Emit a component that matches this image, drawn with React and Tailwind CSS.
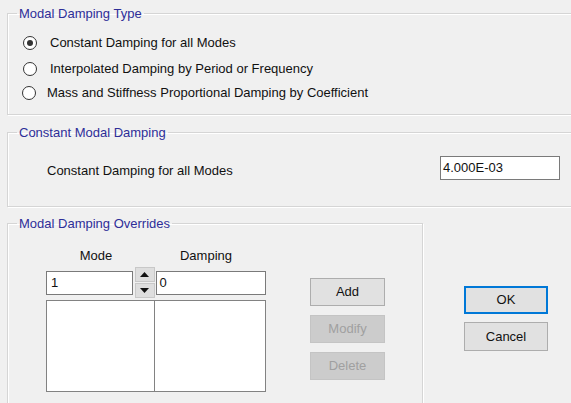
import React from 'react';

const font = { fontFamily: '"Liberation Sans", Arial, sans-serif' };

function GroupBox({ title, className, children }) {
    return (
        <fieldset className={`border border-[#d5d5d5] shadow-[inset_1px_1px_0_#ffffff,1px_1px_0_#ffffff] ${className}`}>
            <legend className="ml-[9px] px-[2px] text-[13px] leading-[15px] text-[#2e2e98]">{title}</legend>
            {children}
        </fieldset>
    );
}

function Radio({ checked, label, className }) {
    return (
        <div className={`flex h-[20px] items-center ${className}`}>
            <span className="flex h-[14px] w-[14px] items-center justify-center rounded-full border border-[#333333] bg-white">
                {checked && <span className="h-[6px] w-[6px] rounded-full bg-[#333333]" />}
            </span>
            <span className="ml-[13px] text-[13px] text-[#111]">{label}</span>
        </div>
    );
}

function Btn({ children, disabled, primary }) {
    if (primary) {
        return (
            <button className="flex h-[28px] w-[84px] items-center justify-center border-2 border-[#0078d7] bg-[#e1e1e1] text-[13px] text-[#111]">
                {children}
            </button>
        );
    }
    return (
        <button
            className={`flex h-[28px] items-center justify-center border text-[13px] ${
                disabled ? 'border-[#c4c4c4] bg-[#cccccc] text-[#a0a0a0]' : 'border-[#adadad] bg-[#e1e1e1] text-[#111]'
            }`}
        >
            {children}
        </button>
    );
}

export default function App() {
    return (
        <div className="h-[403px] w-[571px] overflow-hidden bg-[#f0f0f0] pl-[7px]" style={font}>
            {/* Modal Damping Type */}
            <GroupBox title="Modal Damping Type" className="mt-[6px] w-[600px] pb-[11px]">
                <Radio checked label="Constant Damping for all Modes" className="ml-[15px] mt-[12px]" />
                <Radio label="Interpolated Damping by Period or Frequency" className="ml-[15px] mt-[6px]" />
                <div className="ml-[14px] mt-[4px] flex h-[20px] items-center">
                    <span className="h-[14px] w-[14px] rounded-full border border-[#333333] bg-white" />
                    <span className="ml-[11px] text-[13px] text-[#111]">
                        Mass and Stiffness Proportional Damping by Coefficient
                    </span>
                </div>
            </GroupBox>

            {/* Constant Modal Damping */}
            <GroupBox title="Constant Modal Damping" className="mt-[10px] w-[600px] pb-[26px]">
                <div className="mt-[16px] flex h-[24px] items-center">
                    <span className="ml-[39px] mt-[6px] w-[393px] text-[13px] text-[#111]">
                        Constant Damping for all Modes
                    </span>
                    <div className="flex h-[24px] w-[120px] items-center border border-[#7a7a7a] bg-white pl-[2px] text-[13px] text-[#111]">
                        4.000E-03
                    </div>
                </div>
            </GroupBox>

            <div className="mt-[9px] flex">
                {/* Modal Damping Overrides */}
                <GroupBox title="Modal Damping Overrides" className="h-[220px] w-[416px]">
                    <div className="ml-[38px] flex">
                        <div className="w-[220px]">
                            <div className="mt-[17px] flex text-[13px] leading-[15px] text-[#111]">
                                <span className="w-[100px] text-center">Mode</span>
                                <span className="w-[120px] text-center">Damping</span>
                            </div>
                            <div className="mt-[4px] flex h-[31px] items-center">
                                <div className="flex h-[24px] w-[87px] items-center border border-[#7a7a7a] bg-white pl-[4px] text-[13px] text-[#111]">
                                    1
                                </div>
                                <div className="ml-[2px] flex h-[31px] w-[20px] flex-col gap-[1px]">
                                    <span className="flex flex-1 items-center justify-center border border-[#c8c8c8] bg-[#dedede]">
                                        <svg width="9" height="5" viewBox="0 0 9 5"><path d="M0 5 L4.5 0 L9 5 Z" fill="#111" /></svg>
                                    </span>
                                    <span className="flex flex-1 items-center justify-center border border-[#c8c8c8] bg-[#dedede]">
                                        <svg width="9" height="5" viewBox="0 0 9 5"><path d="M0 0 L4.5 5 L9 0 Z" fill="#111" /></svg>
                                    </span>
                                </div>
                                <div className="ml-[1px] flex h-[24px] w-[111px] items-center border border-[#7a7a7a] bg-white pl-[3px] text-[13px] text-[#111]">
                                    0
                                </div>
                            </div>
                            <div className="mt-[2px] flex h-[92px] border border-[#828282] bg-white">
                                <div className="w-[108px] border-r border-[#828282]" />
                                <div className="flex-1" />
                            </div>
                        </div>
                        <div className="ml-[44px] mt-[47px] flex w-[75px] flex-col gap-[9px]">
                            <Btn>Add</Btn>
                            <Btn disabled>Modify</Btn>
                            <Btn disabled>Delete</Btn>
                        </div>
                    </div>
                </GroupBox>

                <div className="ml-[41px] mt-[70px] flex flex-col gap-[8px]">
                    <Btn primary>OK</Btn>
                    <button className="flex h-[29px] w-[84px] items-center justify-center border border-[#adadad] bg-[#e1e1e1] text-[13px] text-[#111]">
                        Cancel
                    </button>
                </div>
            </div>
        </div>
    );
}
